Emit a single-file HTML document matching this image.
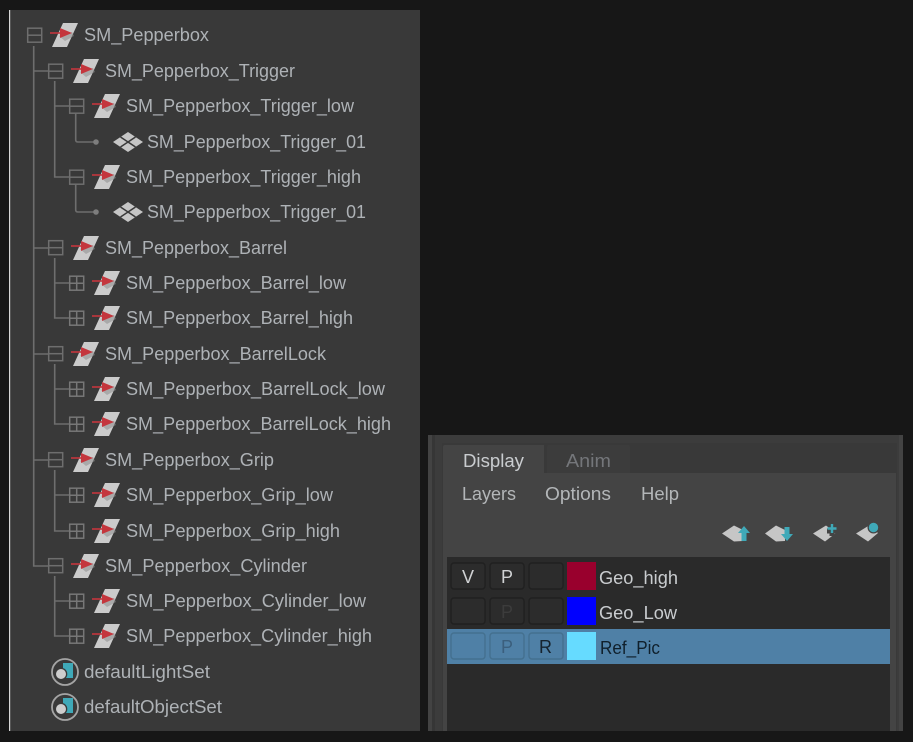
<!DOCTYPE html>
<html><head><meta charset="utf-8"><style>
html,body{margin:0;padding:0;background:#171717;width:913px;height:742px;overflow:hidden}
svg{display:block;position:absolute;left:0;top:0;filter:blur(.35px)}
text{font-family:"Liberation Sans",sans-serif;font-size:18px}
.t{fill:#aeb2b6}
.l{stroke:#6e6e6e;stroke-width:1.6;fill:none}
</style></head><body>
<svg width="913" height="742" viewBox="0 0 913 742">
<defs>
<g id="xf"><path d="M1 12 L12-12 H27 L16 12Z" fill="#cbcbcb"/><path d="M8 1 L21-3 L23 1 L14 6Z" fill="#8e8e8e" opacity=".55"/><path d="M-1-2 H10" stroke="#c4363d" stroke-width="1.6"/><path d="M9-7 L21-2 L9 3Z" fill="#c4363d"/></g>
<g id="minus"><rect x=".7" y=".7" width="14" height="14" fill="none" stroke="#6e6e6e" stroke-width="1.5"/><path d="M1 7.7H14" stroke="#6e6e6e" stroke-width="1.5"/></g>
<g id="plus"><rect x=".7" y=".7" width="14" height="14" fill="none" stroke="#777" stroke-width="1.5"/><path d="M1 7.7H14M7.7 1V14" stroke="#777" stroke-width="1.5"/></g>
<g id="mesh"><path d="M0 0L15-10L30 0L15 10Z" fill="#c6c6c6"/><path d="M7.500-5L22.500 5M7.500 5L22.500-5" stroke="#393939" stroke-width="1.500"/></g>
<g id="set"><circle cx="0" cy="0" r="13" fill="none" stroke="#a4a4a4" stroke-width="1.8"/><rect x="-2" y="-9" width="10" height="15" fill="#3fa9b8"/><circle cx="-4" cy="2" r="6.300" fill="#393939"/><circle cx="-4" cy="2" r="5" fill="#cdcdcd"/></g>
</defs>

<!-- left panel -->
<rect x="10" y="10" width="410" height="721" fill="#393939"/>
<rect x="9" y="10" width="1.2" height="721" fill="#d8d8d8"/>

<!-- tree lines -->
<path class="l" d="M33.700 46V566H48"/>
<path class="l" d="M33.700 71H48M33.700 248H48M33.700 354H48M33.700 460H48"/>
<path class="l" d="M54.700 81V177H69M54.700 106H69"/>
<path class="l" d="M54.700 258V318H69M54.700 283H69"/>
<path class="l" d="M54.700 364V424H69M54.700 389H69"/>
<path class="l" d="M54.700 470V531H69M54.700 495H69"/>
<path class="l" d="M54.700 576V636H69M54.700 601H69"/>
<path class="l" d="M75.700 113V140Q75.700 142 78 142H94"/>
<path class="l" d="M75.700 184V210Q75.700 212 78 212H94"/>
<circle cx="96" cy="142" r="2.800" fill="#7d7d7d"/>
<circle cx="96" cy="212" r="2.800" fill="#7d7d7d"/>

<!-- expanders -->
<use href="#minus" x="27" y="27.500"/>
<use href="#minus" x="48" y="63.500"/>
<use href="#minus" x="69" y="98.500"/>
<use href="#minus" x="69" y="169.500"/>
<use href="#minus" x="48" y="240"/>
<use href="#plus" x="69" y="275.500"/>
<use href="#plus" x="69" y="310.500"/>
<use href="#minus" x="48" y="346"/>
<use href="#plus" x="69" y="381.500"/>
<use href="#plus" x="69" y="416.500"/>
<use href="#minus" x="48" y="452"/>
<use href="#plus" x="69" y="487.500"/>
<use href="#plus" x="69" y="523.500"/>
<use href="#minus" x="48" y="558"/>
<use href="#plus" x="69" y="593.500"/>
<use href="#plus" x="69" y="628.500"/>

<!-- transform icons -->
<use href="#xf" x="51" y="35"/>
<use href="#xf" x="72" y="71"/>
<use href="#xf" x="93" y="106"/>
<use href="#xf" x="93" y="177"/>
<use href="#xf" x="72" y="248"/>
<use href="#xf" x="93" y="283"/>
<use href="#xf" x="93" y="318"/>
<use href="#xf" x="72" y="354"/>
<use href="#xf" x="93" y="389"/>
<use href="#xf" x="93" y="424"/>
<use href="#xf" x="72" y="460"/>
<use href="#xf" x="93" y="495"/>
<use href="#xf" x="93" y="531"/>
<use href="#xf" x="72" y="566"/>
<use href="#xf" x="93" y="601"/>
<use href="#xf" x="93" y="636"/>
<use href="#mesh" x="113" y="142"/>
<use href="#mesh" x="113" y="212"/>
<use href="#set" x="65" y="672"/>
<use href="#set" x="65" y="707"/>

<!-- tree text -->
<g class="t">
<text x="84" y="41" textLength="125" lengthAdjust="spacingAndGlyphs">SM_Pepperbox</text>
<text x="105" y="77" textLength="190" lengthAdjust="spacingAndGlyphs">SM_Pepperbox_Trigger</text>
<text x="126" y="112" textLength="228" lengthAdjust="spacingAndGlyphs">SM_Pepperbox_Trigger_low</text>
<text x="147" y="148" textLength="219" lengthAdjust="spacingAndGlyphs">SM_Pepperbox_Trigger_01</text>
<text x="126" y="183" textLength="235" lengthAdjust="spacingAndGlyphs">SM_Pepperbox_Trigger_high</text>
<text x="147" y="218" textLength="219" lengthAdjust="spacingAndGlyphs">SM_Pepperbox_Trigger_01</text>
<text x="105" y="254" textLength="182" lengthAdjust="spacingAndGlyphs">SM_Pepperbox_Barrel</text>
<text x="126" y="289" textLength="220" lengthAdjust="spacingAndGlyphs">SM_Pepperbox_Barrel_low</text>
<text x="126" y="324" textLength="227" lengthAdjust="spacingAndGlyphs">SM_Pepperbox_Barrel_high</text>
<text x="105" y="360" textLength="221" lengthAdjust="spacingAndGlyphs">SM_Pepperbox_BarrelLock</text>
<text x="126" y="395" textLength="259" lengthAdjust="spacingAndGlyphs">SM_Pepperbox_BarrelLock_low</text>
<text x="126" y="430" textLength="265" lengthAdjust="spacingAndGlyphs">SM_Pepperbox_BarrelLock_high</text>
<text x="105" y="466" textLength="169" lengthAdjust="spacingAndGlyphs">SM_Pepperbox_Grip</text>
<text x="126" y="501" textLength="207" lengthAdjust="spacingAndGlyphs">SM_Pepperbox_Grip_low</text>
<text x="126" y="537" textLength="214" lengthAdjust="spacingAndGlyphs">SM_Pepperbox_Grip_high</text>
<text x="105" y="572" textLength="202" lengthAdjust="spacingAndGlyphs">SM_Pepperbox_Cylinder</text>
<text x="126" y="607" textLength="240" lengthAdjust="spacingAndGlyphs">SM_Pepperbox_Cylinder_low</text>
<text x="126" y="642" textLength="246" lengthAdjust="spacingAndGlyphs">SM_Pepperbox_Cylinder_high</text>
<text x="84" y="678" textLength="126" lengthAdjust="spacingAndGlyphs">defaultLightSet</text>
<text x="84" y="713" textLength="138" lengthAdjust="spacingAndGlyphs">defaultObjectSet</text>
</g>

<!-- right panel -->
<rect x="428" y="435" width="475" height="296" fill="#3c3c3c"/>
<rect x="428" y="435" width="4" height="296" fill="#434343"/>
<rect x="432" y="435" width="3" height="296" fill="#363636"/>
<rect x="899" y="435" width="4" height="296" fill="#434343"/>
<rect x="442" y="443" width="455" height="288" fill="#393939"/>
<rect x="443" y="473" width="453" height="258" fill="#444"/>
<path d="M443 473V447Q443 445 445 445H544V473Z" fill="#444"/>
<path d="M547 473V447Q547 445 549 445H628Q630 445 630 447V473Z" fill="#3c3c3c"/>
<text x="463" y="467" fill="#c9cccf" textLength="61" lengthAdjust="spacingAndGlyphs">Display</text>
<text x="566" y="467" fill="#74767a" textLength="45" lengthAdjust="spacingAndGlyphs">Anim</text>
<text x="462" y="500" fill="#b3b6b8" textLength="54" lengthAdjust="spacingAndGlyphs">Layers</text>
<text x="545" y="500" fill="#b3b6b8" textLength="66" lengthAdjust="spacingAndGlyphs">Options</text>
<text x="641" y="500" fill="#b3b6b8" textLength="38" lengthAdjust="spacingAndGlyphs">Help</text>

<!-- layer toolbar icons -->
<g fill="#c6c6c6">
<path d="M722 533.500L734 525.500L743 530V541L734 541.500Z"/>
<path d="M765 533.500L776 525.500L785 530V541L776 541.500Z"/>
<path d="M813 533.500L826 525.500L836 533L825 541.500Z"/>
<path d="M856 533.500L869 525.500L878 533L868 541.500Z"/>
</g>
<path d="M744 526L750 533H746.500V541H741.500V533H738Z" fill="#3fa9b8"/>
<path d="M787 541L793 534H789.500V527H784.500V534H781Z" fill="#3fa9b8"/>
<path d="M827 531H837M832 526V536" stroke="#444" stroke-width="5"/>
<path d="M827.500 528.500H836.500M832 524V533" stroke="#3fa9b8" stroke-width="2.400"/>
<circle cx="873.500" cy="527.500" r="6" fill="#444"/>
<circle cx="873.500" cy="527.500" r="4.700" fill="#3fa9b8"/>

<!-- layer list -->
<rect x="447" y="557" width="443" height="174" fill="#2a2a2a"/>
<rect x="447" y="629" width="443" height="35" fill="#4f80a6"/>

<g fill="#2c2c2c" stroke="#202020" stroke-width="1.400">
<rect x="451" y="563" width="34" height="26" rx="3"/>
<rect x="490" y="563" width="34" height="26" rx="3"/>
<rect x="529" y="563" width="34" height="26" rx="3"/>
<rect x="451" y="598" width="34" height="26" rx="3"/>
<rect x="490" y="598" width="34" height="26" rx="3"/>
<rect x="529" y="598" width="34" height="26" rx="3"/>
</g>
<g fill="#4f80a6" stroke="#44708f" stroke-width="1.400">
<rect x="451" y="633" width="34" height="26" rx="3"/>
<rect x="490" y="633" width="34" height="26" rx="3"/>
<rect x="529" y="633" width="34" height="26" rx="3"/>
</g>
<rect x="567" y="562" width="29" height="28" fill="#99002d"/>
<rect x="567" y="597" width="29" height="28" fill="#0000ff"/>
<rect x="567" y="632" width="29" height="28" fill="#66dbff"/>

<text x="462" y="583" fill="#d0d2d4">V</text>
<text x="501" y="583" fill="#d0d2d4">P</text>
<text x="501" y="618" fill="#3c3c3c">P</text>
<text x="501" y="653" fill="#3b5f7d">P</text>
<text x="539" y="653" fill="#16232e">R</text>
<text x="599" y="584" fill="#c9cccf" textLength="79" lengthAdjust="spacingAndGlyphs">Geo_high</text>
<text x="599" y="619" fill="#c9cccf" textLength="78" lengthAdjust="spacingAndGlyphs">Geo_Low</text>
<text x="600" y="654" fill="#10202c" textLength="60" lengthAdjust="spacingAndGlyphs">Ref_Pic</text>
</svg>
</body></html>
